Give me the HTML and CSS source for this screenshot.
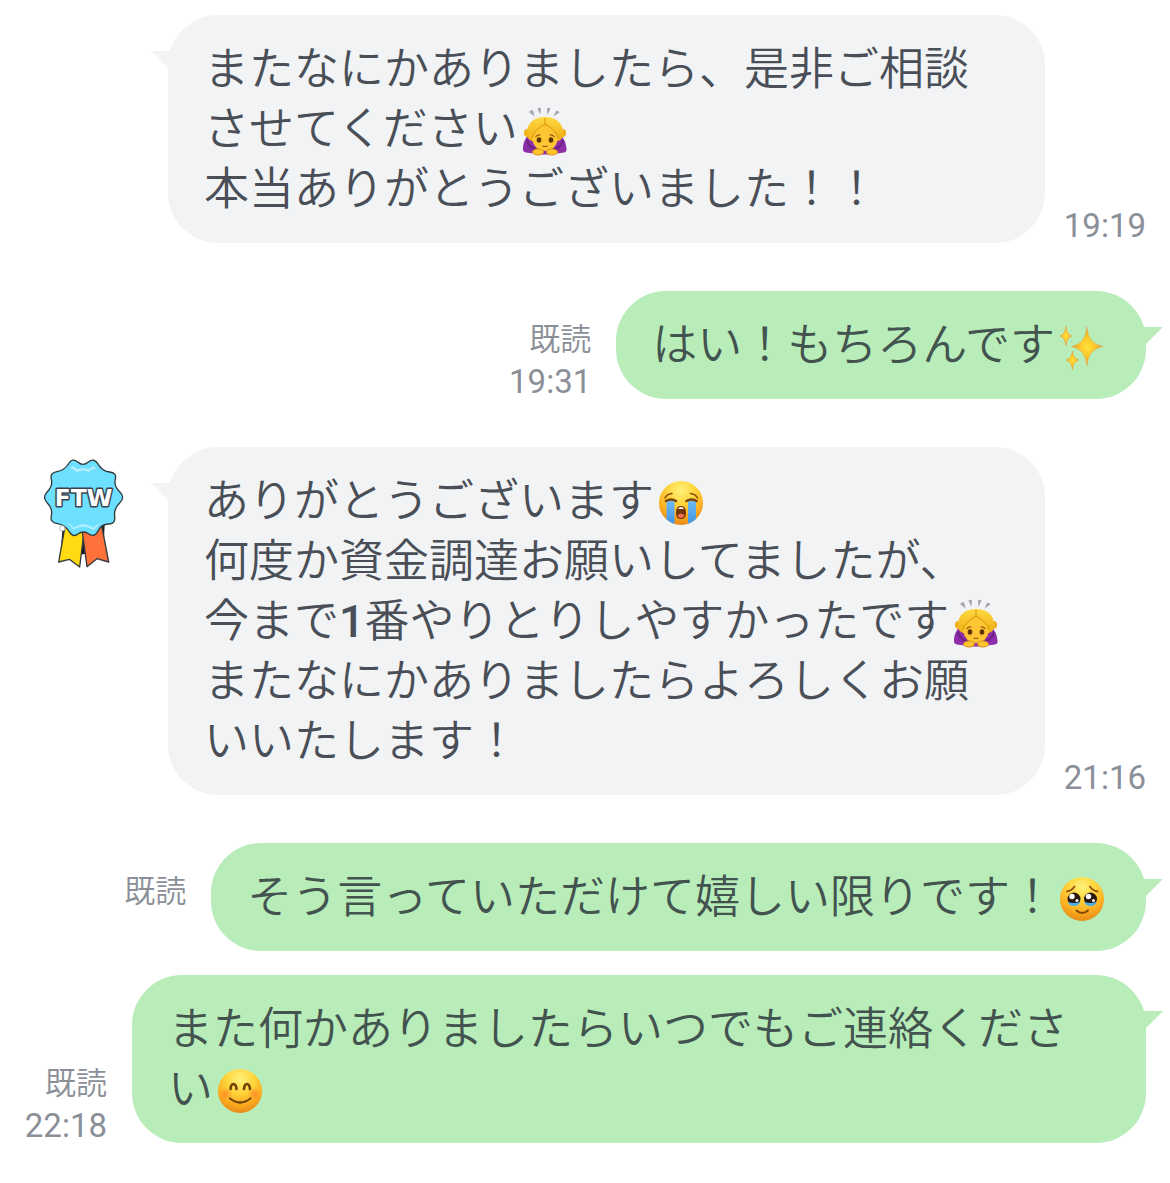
FILE: index.html
```html
<!DOCTYPE html>
<html lang="ja">
<head>
<meta charset="utf-8">
<meta name="viewport" content="width=device-width, initial-scale=1">
<title>トーク</title>
<link rel="stylesheet" href="styles.css">
</head>
<body>
<svg class="defs" aria-hidden="true">
  <defs>
    <radialGradient id="skin" cx="50%" cy="22%" r="78%">
      <stop offset="0" stop-color="#fff27a"/>
      <stop offset=".4" stop-color="#ffd53c"/>
      <stop offset=".75" stop-color="#fbab1f"/>
      <stop offset="1" stop-color="#e68a18"/>
    </radialGradient>
    <linearGradient id="hair" x1="0" y1="0" x2="0" y2="1">
      <stop offset="0" stop-color="#ffd942"/>
      <stop offset="1" stop-color="#eeae12"/>
    </linearGradient>
    <linearGradient id="tears" x1="0" y1="0" x2="0" y2="1">
      <stop offset="0" stop-color="#6db9f2"/>
      <stop offset="1" stop-color="#3f93e6"/>
    </linearGradient>
    <radialGradient id="spark">
      <stop offset="0" stop-color="#ffe23a"/>
      <stop offset=".5" stop-color="#fcc62c"/>
      <stop offset="1" stop-color="#e9942c"/>
    </radialGradient>
    <radialGradient id="blush">
      <stop offset="0" stop-color="#ff6b2b" stop-opacity=".6"/>
      <stop offset="1" stop-color="#ff8a2b" stop-opacity="0"/>
    </radialGradient>
    <clipPath id="face-clip"><circle cx="23" cy="23" r="22"/></clipPath>

    <symbol id="bow" viewBox="0 0 46 50">
      <g fill="#a4a6ac">
        <path d="M7 6 9 4.500q2-1 2.400 1L12.500 10.500z"/>
        <path d="M15.500 2.500q2-1.500 3.500 0L18.300 9z"/>
        <path d="M25 2.500q2-1.500 3.500 0L25.500 9z"/>
        <path d="M34 5q2-1 3.500 1.500L31.500 10.500z"/>
      </g>
      <path d="M7 29C2 33 1 39 1 43q0 3 3 3.500l15 2h8l15-2q3-.5 2.500-4C44 37 42 32 38 29z" fill="#8d2da8"/>
      <path d="M5 34q1 7 10 10M41 34q-1 7-10 10" fill="none" stroke="#6d2188" stroke-width="2"/>
      <path d="M6 23q-5 0-4 5 1 4 6 3zM40 23q5 0 4 5-1 4-6 3z" fill="#f0b01f"/>
      <path d="M5 29C4 18 11 11 23 11s19 7 18 18q-1 5-5 6H10q-4-1-5-6z" fill="url(#hair)"/>
      <path d="M23 18Q12 24 10 33q2 11 13 12 11-1 13-12Q34 24 23 18z" fill="#ffc634"/>
      <path d="M23 12v6Q12 24 10 32M23 18q11 6 13 14" fill="none" stroke="#d9930f" stroke-width="1"/>
      <ellipse cx="17" cy="34" rx="2.300" ry="2.700" fill="#5c350b"/>
      <ellipse cx="29" cy="34" rx="2.300" ry="2.700" fill="#5c350b"/>
      <path d="M13.500 31q2-2.500 5-2M27.500 29q3-.5 5 2M20.500 40q2.500 1 5 0" fill="none" stroke="#96580e" stroke-width="1.200"/>
      <ellipse cx="16" cy="46" rx="5.500" ry="3" fill="#ffc52d" stroke="#df9018"/>
      <ellipse cx="30" cy="46" rx="5.500" ry="3" fill="#ffc52d" stroke="#df9018"/>
    </symbol>

    <symbol id="sparkles" viewBox="-1 0 46 50">
      <g fill="url(#spark)" stroke="#e6a03c" stroke-width=".5">
        <path d="M27 5Q28 22 43 24.500 28 27 27 44 25.500 27 11.500 24.500 25.500 22 27 5z"/>
        <path d="M6 4Q6.500 12.500 12 14 6.500 15.500 6 24 5 15.500 0 14 5 12.500 6 4z"/>
        <path d="M12.500 29Q13 36.500 19 38 13 39.500 12.500 48 11.500 39.500 6 38 11.500 36.500 12.500 29z"/>
      </g>
    </symbol>

    <symbol id="sob" viewBox="0 0 46 46">
      <circle cx="23" cy="23" r="22" fill="url(#skin)"/>
      <g clip-path="url(#face-clip)" fill="url(#tears)">
        <path d="M8.500 21h8v24h-8zM30 21h8v24h-8z"/>
      </g>
      <path d="M8 21q5-3 10 0M28.500 21q5-3 10 0" fill="none" stroke="#784309" stroke-width="2.600" stroke-linecap="round"/>
      <path d="M7 18q2-4 7-4.500M32.500 13.500q5 .5 7 4.500" fill="none" stroke="#8a5010" stroke-width="1.600" stroke-linecap="round"/>
      <path d="M18 33q0-7 5-7t5 7q0 6-5 6t-5-6z" fill="#703406"/>
      <path d="M19.500 35q3.500-3 7 0-.5 3-3.500 3t-3.500-3z" fill="#ef6c4e"/>
      <path d="M20 29q1-2 3-2t3 2z" fill="#fff"/>
    </symbol>

    <symbol id="holding" viewBox="0 0 46 46">
      <circle cx="23" cy="23" r="22" fill="url(#skin)"/>
      <circle cx="15" cy="23" r="6.500" fill="#2a1910"/>
      <circle cx="31.500" cy="23" r="6.500" fill="#2a1910"/>
      <path d="M9 26q6 2 12 0-1 4-6 4t-6-4zM25.500 26q6 2 12 0-1 4-6 4t-6-4z" fill="#4aaeea"/>
      <g fill="#fff">
        <circle cx="13" cy="20.500" r="2.700"/><circle cx="29.500" cy="20.500" r="2.700"/>
        <circle cx="18" cy="24.500" r="1.500"/><circle cx="34.500" cy="24.500" r="1.500"/>
      </g>
      <path d="M8 15.500q5-1 7.500-5M31 10.500q2.500 4 7.500 5" fill="none" stroke="#94520c" stroke-width="1.800" stroke-linecap="round"/>
      <path d="M17.500 34.500q5.500 5 11.500 0" fill="none" stroke="#81440a" stroke-width="2" stroke-linecap="round"/>
    </symbol>

    <symbol id="smile" viewBox="0 0 46 46">
      <circle cx="23" cy="23" r="22" fill="url(#skin)"/>
      <circle cx="8.500" cy="26" r="7" fill="url(#blush)"/>
      <circle cx="37.500" cy="26" r="7" fill="url(#blush)"/>
      <path d="M13.500 21q.5-5 3-5t3 5M27 21q.5-5 3-5t3 5" fill="none" stroke="#704107" stroke-width="2.600" stroke-linecap="round"/>
      <path d="M13 30.500q10 8 20.500 0" fill="none" stroke="#704107" stroke-width="2.200" stroke-linecap="round"/>
    </symbol>
  </defs>
</svg>

<main class="chat">
  <article class="row incoming">
    <div class="gutter"></div>
    <p class="bubble">またなにかありましたら、是非ご相談させてください<svg class="emoji" role="img" aria-label="お辞儀"><use href="#bow"/></svg><br>本当ありがとうございました！！</p>
    <div class="meta"><time class="time">19:19</time></div>
  </article>

  <article class="row outgoing">
    <div class="meta"><span class="read">既読</span><time class="time">19:31</time></div>
    <p class="bubble">はい！もちろんです<svg class="emoji" role="img" aria-label="キラキラ"><use href="#sparkles"/></svg></p>
  </article>

  <article class="row incoming">
    <div class="gutter">
      <svg class="avatar" viewBox="40 40 246 330" role="img" aria-label="FTW">
        <path d="M99 244 92 340 165 328 222 300 225 240z" fill="#15191c"/>
        <g stroke="#333a3f" stroke-width="4" stroke-linejoin="round">
          <path d="M107 240 87 352 119 344 150 367 163 262z" fill="#ffdb12"/>
          <path d="M158 262 172 366 202 342 237 352 216 242z" fill="#ff7138"/>
          <path d="M144 52Q160 66 176 52Q193 38 206 59Q218 80 240 82Q262 84 257 104Q252 124 270 141Q288 158 270 175Q252 192 255 215Q258 238 237 238Q215 238 205 259Q195 280 178 268Q160 256 145 268Q130 280 118 260Q105 240 83 237Q60 234 65 213Q70 192 53 175Q36 158 53 141Q70 124 65 104Q60 84 82 81Q103 78 116 58Q128 38 144 52z" fill="#6ddfff"/>
        </g>
        <path d="M120 70 130 64 144 74 160 70 178 74 191 64 202 74 190 73 176 82 160 77 142 82 129 73zM112 234Q123 237 132 249 145 240 160 238 177 240 191 249 200 240 212 234 200 250 192 256 174 245 160 246 144 246 131 256 124 244 112 234z" fill="#b2efff"/>
        <circle cx="98" cy="251" r="8" fill="#fff" stroke="#999" stroke-width="2"/>
        <text class="avatar-text" x="162" y="184">FTW</text>
      </svg>
    </div>
    <p class="bubble">ありがとうございます<svg class="emoji" role="img" aria-label="大泣き"><use href="#sob"/></svg><br>何度か資金調達お願いしてましたが、<br>今まで<span class="digit">1</span>番やりとりしやすかったです<svg class="emoji" role="img" aria-label="お辞儀"><use href="#bow"/></svg><br>またなにかありましたらよろしくお願いいたします！</p>
    <div class="meta"><time class="time">21:16</time></div>
  </article>

  <article class="row outgoing">
    <div class="meta"><span class="read">既読</span></div>
    <p class="bubble">そう言っていただけて嬉しい限りです！<svg class="emoji" role="img" aria-label="うるうる"><use href="#holding"/></svg></p>
  </article>

  <article class="row outgoing follow">
    <div class="meta"><span class="read">既読</span><time class="time">22:18</time></div>
    <p class="bubble">また何かありましたらいつでもご連絡ください<svg class="emoji" role="img" aria-label="にっこり"><use href="#smile"/></svg></p>
  </article>
</main>
</body>
</html>
```
FILE: styles.css
```css
* {
  box-sizing: border-box;
}

body {
  margin: 0;
  background: #fff;
  font-family: Roboto, "Noto Sans CJK JP", sans-serif;
}

.defs {
  position: absolute;
  width: 0;
  height: 0;
}

.chat {
  display: flex;
  flex-direction: column;
  padding: 15px 24px 40px 0;
}

.row {
  display: flex;
  align-items: flex-end;
  margin-top: 48px;
}

.row:first-child {
  margin-top: 0;
}

.row.follow {
  margin-top: 24px;
}

.incoming {
  gap: 18px;
}

.outgoing {
  justify-content: flex-end;
  gap: 25px;
  padding-left: 24px;
}

.gutter {
  flex: none;
  align-self: flex-start;
  width: 150px;
  padding: 11px 0 0 43px;
}

.avatar {
  display: block;
  width: 82px;
  height: 110px;
}

.avatar-text {
  font: bold 70px "DejaVu Sans", sans-serif;
  text-anchor: middle;
  fill: #fff;
  stroke: #39424c;
  stroke-width: 9px;
  stroke-linejoin: round;
  paint-order: stroke;
}

.bubble {
  position: relative;
  margin: 0;
  padding: 25px 36px 23px;
  border-radius: 50px;
  font-size: 45px;
  font-weight: 350;
  line-height: 60px;
  line-break: anywhere;
}

.incoming .bubble {
  flex: 1;
  background: #f1f3f5;
  color: #494e57;
}

.outgoing .bubble {
  background: #b8edb9;
  color: #43534f;
}

/* Speech tail, overlapping the rounded corner */
.bubble::before {
  content: "";
  position: absolute;
  top: 36px;
  width: 24px;
  height: 24px;
  background: inherit;
}

.incoming .bubble::before {
  left: -17px;
  clip-path: polygon(0 0, 100% 0, 100% 100%);
}

.outgoing .bubble::before {
  right: -17px;
  clip-path: polygon(0 0, 100% 0, 0 100%);
}

.digit {
  font-weight: 500;
}

.emoji {
  width: 46px;
  height: 50px;
  margin: 0 5px 0 4px;
  vertical-align: -11px;
}

.meta {
  display: grid;
  flex: none;
  grid-template-rows: 52px 34px;
  min-width: 83px;
  color: #8b8f98;
  text-align: right;
}

.read {
  grid-row: 1;
  font-size: 31px;
  font-weight: 350;
  line-height: 54px;
}

.time {
  grid-row: 2;
  font-size: 33px;
  line-height: 34px;
}
```
